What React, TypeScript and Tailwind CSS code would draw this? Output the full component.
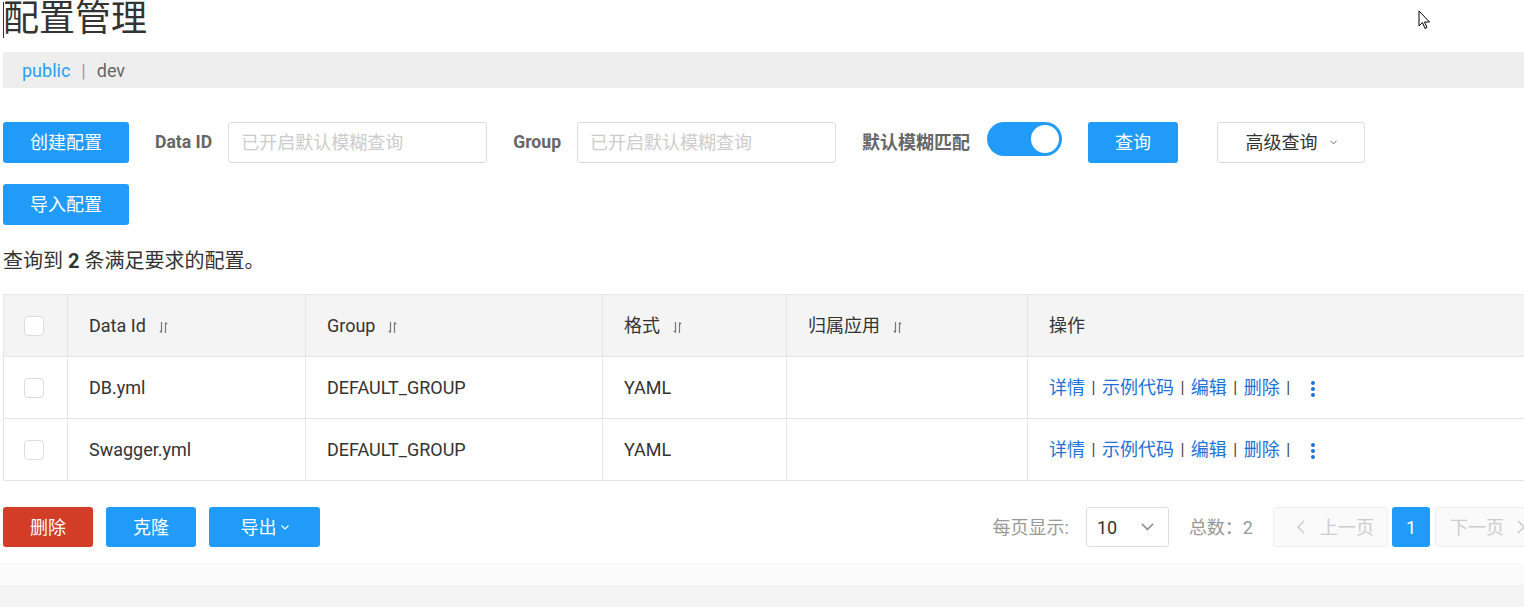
import type { ReactNode } from "react";

const blue = "bg-[#209bfa]";

type Row = { id: string; group: string; format: string; app: string };

const rows: Row[] = [
  { id: "DB.yml", group: "DEFAULT_GROUP", format: "YAML", app: "" },
  { id: "Swagger.yml", group: "DEFAULT_GROUP", format: "YAML", app: "" },
];

function SortIcon() {
  return (
    <svg width="9" height="13" viewBox="0 0 9 13" className="ml-[13px] inline-block text-[#777]">
      <path d="M2.5 1v10.5M0.8 9.8l1.7 1.7" stroke="currentColor" strokeWidth="1.2" fill="none" />
      <path d="M6.5 12V1.5M6.5 1.5l1.7 1.7" stroke="currentColor" strokeWidth="1.2" fill="none" />
    </svg>
  );
}

function Chevron({ className, w = 8, h = 5 }: { className: string; w?: number; h?: number }) {
  return (
    <svg width={w} height={h} viewBox="0 0 8 5" className={className}>
      <path d="M0.5 0.5L4 4L7.5 0.5" stroke="currentColor" strokeWidth="1.1" fill="none" />
    </svg>
  );
}

function Checkbox() {
  return <span className="block w-[20px] h-[20px] rounded-[4px] border border-[#ddd] bg-white ml-[20px]" />;
}

function Btn({ children, className }: { children: ReactNode; className: string }) {
  return (
    <button
      className={`h-[40px] rounded-[3px] text-white text-[18px] flex items-center justify-center ${className}`}
    >
      {children}
    </button>
  );
}

function Actions() {
  const sep = <span className="mx-[6.5px] text-[#444] text-[16px]">|</span>;
  return (
    <div className="flex items-center text-[#2272d6] text-[18px]">
      <span>详情</span>
      {sep}
      <span>示例代码</span>
      {sep}
      <span>编辑</span>
      {sep}
      <span>删除</span>
      {sep}
      <svg width="6" height="18" viewBox="0 0 6 18" className="ml-[13px] mt-[3px]">
        <circle cx="3" cy="3" r="2" fill="#2272d6" />
        <circle cx="3" cy="9" r="2" fill="#2272d6" />
        <circle cx="3" cy="15" r="2" fill="#2272d6" />
      </svg>
    </div>
  );
}

export default function App() {
  const cell = "border border-[#e6e6e6] px-[21px] text-left font-normal";
  return (
    <div className="relative w-[1524px] h-[607px] overflow-hidden bg-white text-[#333] font-['Roboto','Noto_Sans_CJK_SC',sans-serif]">
      <div className="pl-[3px] w-[1550px]">
        <h1 className="text-[36px] leading-[38px] font-normal text-[#333]">配置管理</h1>

        <div className="mt-[14px] h-[36px] bg-[#eee] flex items-center pl-[19px] text-[18px]">
          <span className="text-[#2a9df4]">public</span>
          <span className="mx-[11px] text-[#999] text-[18px]">|</span>
          <span className="text-[#666]">dev</span>
        </div>

        <div className="mt-[34px] flex items-center h-[41px]">
          <Btn className={`${blue} w-[126px] h-[41px]`}>创建配置</Btn>
          <span className="ml-[26px] text-[17.6px] font-bold text-[#666]">Data ID</span>
          <div className="ml-[16px] w-[259px] h-[41px] border border-[#ddd] rounded-[3px] flex items-center pl-[12px] text-[18px] text-[#ccc]">
            已开启默认模糊查询
          </div>
          <span className="ml-[26px] text-[17.6px] font-bold text-[#666]">Group</span>
          <div className="ml-[16px] w-[259px] h-[41px] border border-[#ddd] rounded-[3px] flex items-center pl-[12px] text-[18px] text-[#ccc]">
            已开启默认模糊查询
          </div>
          <span className="ml-[26px] text-[18px] font-bold text-[#666]">默认模糊匹配</span>
          <div className="ml-[17px] w-[75px] h-[34px] self-start rounded-full bg-[#209bfa] flex items-center justify-end pr-px">
            <span className="w-[32px] h-[32px] rounded-full bg-white border-2 border-[#209bfa]" />
          </div>
          <Btn className={`${blue} ml-[26px] w-[90px] h-[41px]`}>查询</Btn>
          <button className="ml-[39px] w-[148px] h-[41px] rounded-[3px] border border-[#ddd] bg-white flex items-center justify-center text-[18px] text-[#333]">
            高级查询
            <Chevron className="ml-[12px] text-[#666]" w={7} h={5} />
          </button>
        </div>

        <div className="mt-[21px]">
          <Btn className={`${blue} w-[126px] h-[41px]`}>导入配置</Btn>
        </div>

        <p className="mt-[21px] text-[20px] leading-[30px] text-[#333]">
          查询到 <b className="font-bold">2</b> 条满足要求的配置。
        </p>

        <table className="mt-[18px] w-[1547px] border-collapse table-fixed text-[18px]">
          <colgroup>
            <col className="w-[64px]" />
            <col className="w-[238px]" />
            <col className="w-[297px]" />
            <col className="w-[184px]" />
            <col className="w-[241px]" />
            <col />
          </colgroup>
          <thead>
            <tr className="h-[62px] bg-[#f4f4f4]">
              <th className="border border-[#e6e6e6]">
                <Checkbox />
              </th>
              <th className={cell}>
                Data Id
                <SortIcon />
              </th>
              <th className={cell}>
                Group
                <SortIcon />
              </th>
              <th className={cell}>
                格式
                <SortIcon />
              </th>
              <th className={cell}>
                归属应用
                <SortIcon />
              </th>
              <th className={cell}>操作</th>
            </tr>
          </thead>
          <tbody>
            {rows.map((r) => (
              <tr key={r.id} className="h-[62px]">
                <td className="border border-[#e6e6e6]">
                  <Checkbox />
                </td>
                <td className={cell}>{r.id}</td>
                <td className={cell}>{r.group}</td>
                <td className={cell}>{r.format}</td>
                <td className={cell}>{r.app}</td>
                <td className={cell}>
                  <Actions />
                </td>
              </tr>
            ))}
          </tbody>
        </table>

        <div className="mt-[26px] flex items-center h-[40px]">
          <Btn className="bg-[#d33c26] w-[90px]">删除</Btn>
          <Btn className={`${blue} ml-[13px] w-[90px]`}>克隆</Btn>
          <Btn className={`${blue} ml-[13px] w-[111px]`}>
            导出
            <Chevron className="ml-[4px] text-white" w={8} h={5} />
          </Btn>

          <div className="ml-auto flex items-center text-[18px]">
            <span className="text-[#999]">每页显示:</span>
            <div className="ml-[17px] w-[83px] h-[40px] border border-[#ddd] rounded-[3px] flex items-center pl-[10px] pr-[14px] justify-between">
              <span className="text-[#333]">10</span>
              <Chevron className="text-[#999]" w={13} h={8} />
            </div>
            <span className="ml-[20px] text-[#999]">总数：2</span>
            <div className="ml-[20px] w-[115px] h-[40px] border border-[#eee] bg-[#fafafa] rounded-[3px] flex items-center pl-[23px] text-[#ccc]">
              <svg width="8" height="14" viewBox="0 0 8 14" className="mr-[15px]">
                <path d="M7 1L1 7l6 6" stroke="#ccc" strokeWidth="1.5" fill="none" />
              </svg>
              上一页
            </div>
            <div className="ml-[4px] w-[38px] h-[40px] rounded-[3px] bg-[#209bfa] text-white flex items-center justify-center">
              1
            </div>
            <div className="ml-[5px] w-[115px] h-[40px] border border-[#eee] bg-[#fafafa] rounded-[3px] flex items-center pl-[14px] text-[#ccc]">
              下一页
              <svg width="8" height="14" viewBox="0 0 8 14" className="ml-[13px]">
                <path d="M1 1l6 6-6 6" stroke="#ccc" strokeWidth="1.5" fill="none" />
              </svg>
            </div>
          </div>
        </div>
      </div>

      <div className="mt-[16px] h-[22px] bg-[#fbfbfb]" />
      <div className="h-[40px] bg-[#f4f4f4]" />

      <span className="absolute left-[3px] top-[2px] w-px h-[36px] bg-[#333]" />
      <svg
        width="13"
        height="20"
        viewBox="0 0 13 20"
        className="absolute left-[1418px] top-[10px]"
      >
        <path
          d="M1 1v15l3.5-3.5 2.5 6 2-1-2.5-5.5h5z"
          fill="white"
          stroke="black"
          strokeWidth="1"
          strokeLinejoin="round"
        />
      </svg>
    </div>
  );
}
